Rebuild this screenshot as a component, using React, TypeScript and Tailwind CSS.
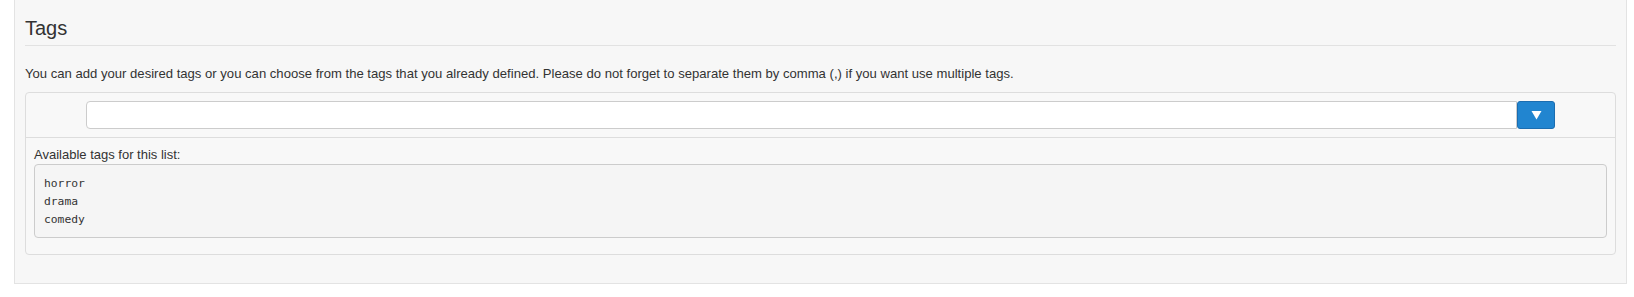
import React from "react";

export default function App() {
  return (
    <div className="min-h-[297px] bg-white text-[#333]" style={{ fontFamily: '"Liberation Sans", Arial, sans-serif' }}>
      <div className="ml-[14px] mr-[7px] border border-t-0 border-[#e3e3e3] bg-[#f7f7f7] px-[10px] pb-[28px]">
        <h3 className="pt-[17px] text-[20px] leading-[22px] font-normal">Tags</h3>
        <hr className="mt-[6px] border-0 border-t border-[#e2e2e2]" />
        <p className="mt-[19px] text-[13.1px] leading-[18px]">
          You can add your desired tags or you can choose from the tags that you already defined. Please do not forget to separate them by comma (,) if you want use multiple tags.
        </p>
        <div className="mt-[9px] rounded-[4px] border border-[#dddddd] bg-[#f8f8f8]">
          <div className="flex items-stretch border-b border-[#dddddd] px-[60px] py-[8px]">
            <input
              type="text"
              className="h-[28px] flex-1 rounded-l-[4px] border border-[#cccccc] bg-white px-2 text-[13px] outline-none"
            />
            <button className="flex h-[28px] w-[38px] items-center justify-center rounded-[3px] border border-[#1b6db0] bg-[#2185d0]">
              <svg width="11" height="10" viewBox="0 0 11 10">
                <path d="M0.5 1 L10.5 1 L5.5 9.5 Z" fill="#ffffff" />
              </svg>
            </button>
          </div>
          <div className="px-[8px] pt-[8px] pb-[16px]">
            <div className="text-[13px] leading-[18px]">Available tags for this list:</div>
            <pre
              className="rounded-[4px] border border-[#cccccc] bg-[#f5f5f5] px-[9px] pt-[10px] pb-[8px] text-[11.3px] leading-[18px] text-[#333]"
              style={{ fontFamily: '"DejaVu Sans Mono", "Liberation Mono", monospace' }}
            >
{`horror
drama
comedy`}
            </pre>
          </div>
        </div>
      </div>
    </div>
  );
}
